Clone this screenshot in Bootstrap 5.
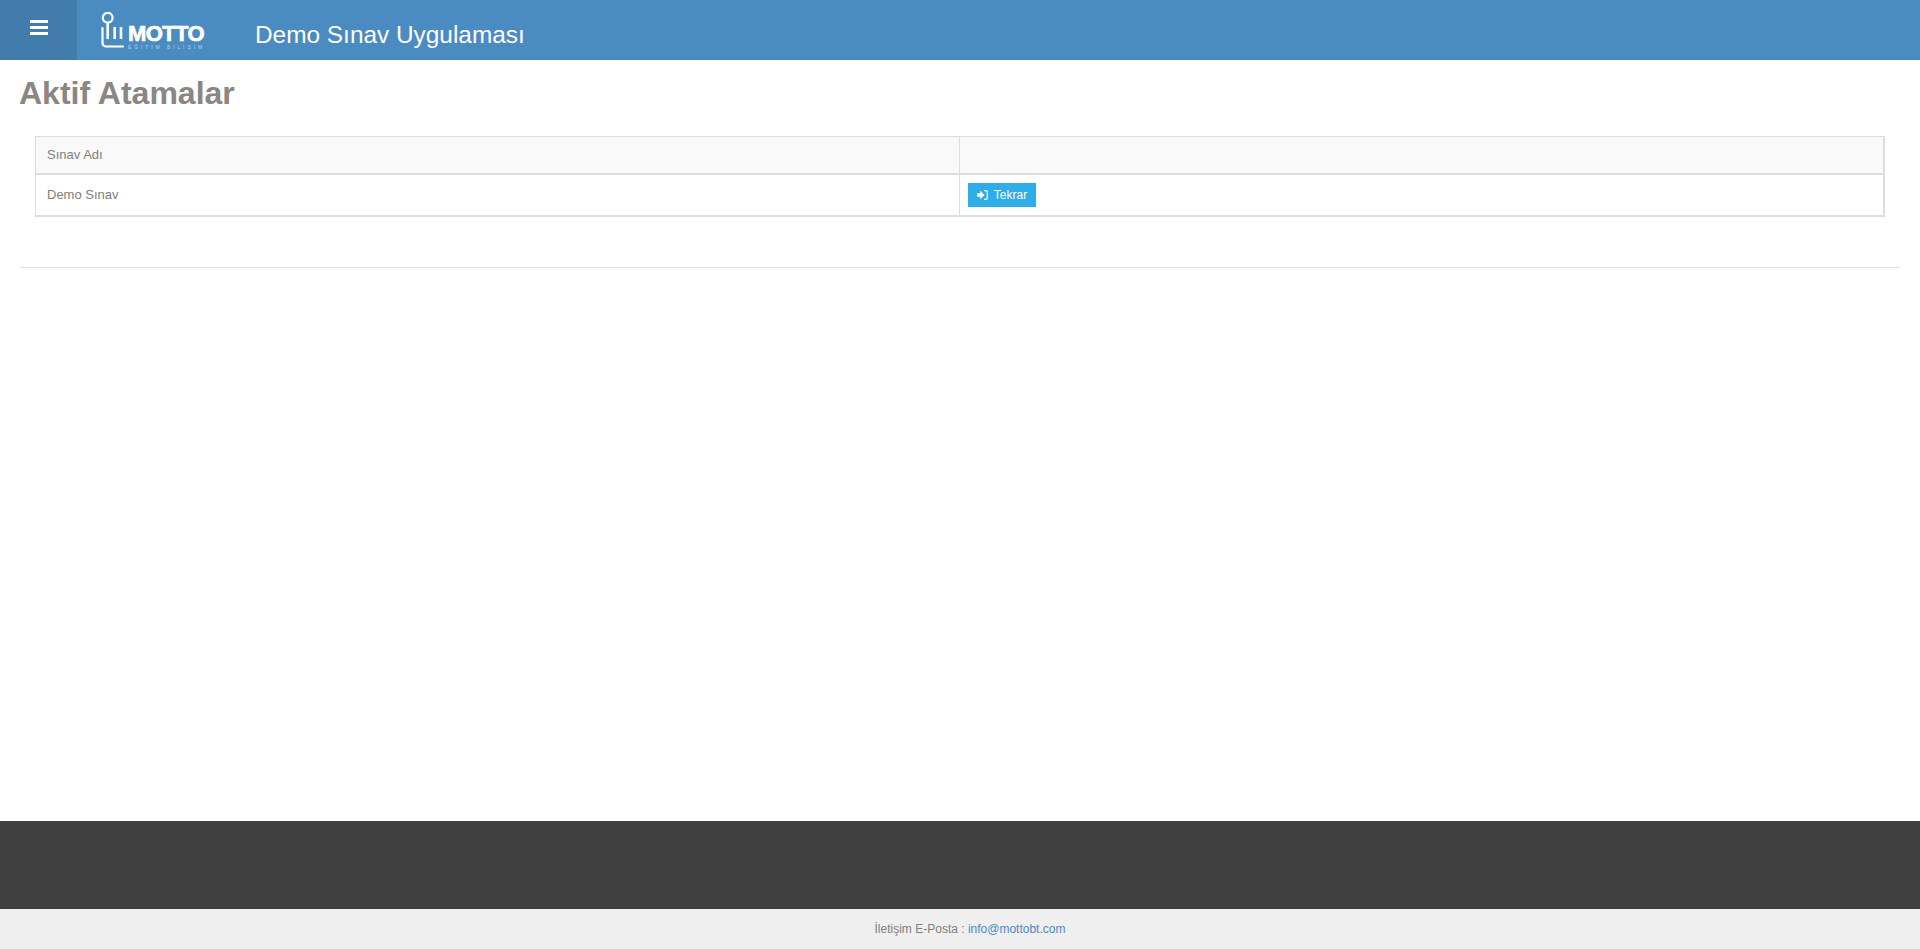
<!DOCTYPE html>
<html lang="tr">
<head>
<meta charset="utf-8">
<title>Demo Sınav Uygulaması</title>
<link href="https://cdn.jsdelivr.net/npm/bootstrap@5.3.0/dist/css/bootstrap.min.css" rel="stylesheet">
<style>
html,body{height:100%}
body{font-family:"Liberation Sans",Arial,sans-serif;color:#827e7c;font-size:13px;background:#fff}
.shell{height:949px}
.topbar{height:60px;background:#4a8bc2}
.menu-toggle{width:77px;background:#427cad;border:0;padding:0 0 6px 0;gap:3px}
.menu-bar{display:block;width:18px;height:3px;background:#fff;margin:0 auto}
.logo-box{margin-left:24px;width:110px;height:60px}
.logo-word{font-size:22px;font-weight:700;line-height:17px;color:#fff;letter-spacing:-.6px;-webkit-text-stroke:.7px #fff}
.logo-sub{font-size:5px;line-height:6px;letter-spacing:2.9px;color:#b5d2ea;white-space:nowrap;margin-top:2px}
.logo-mark{margin-top:12px}
.logo-text{margin-top:25px}
.app-title{font-size:24.4px;color:#fff;margin:5px 0 0 44px;line-height:60px}
.page-head{font-size:32px;font-weight:700;color:#8a8684;margin:15px 0 0;padding:0 0 0 19px;line-height:36px}
.table-wrap{margin:25px 35px 0 35px}
.exam-table{margin:0;width:100%;table-layout:fixed;color:#827e7c;font-size:13px;border-style:solid;border-color:#ddd;border-width:1px 2px 2px 1px}
.exam-table th,.exam-table td{border:1px solid #ddd;padding:0 0 0 11px;vertical-align:middle;font-weight:400;color:#827e7c}
.exam-table thead th{background:#f9f9f9;height:37px;border-bottom-width:2px}
.exam-table thead th:first-child{width:924px}
.exam-table tbody td{height:42px;background:#fff}
.exam-table tbody td:last-child{padding-left:8px}
.retry-btn{background:#2eade8;border:0;border-radius:0;color:#fff;font-size:12px;height:24px;width:68px;padding:0;line-height:24px;--bs-btn-hover-bg:#2eade8;--bs-btn-hover-color:#fff}
.retry-btn svg{margin-right:6px;vertical-align:-1px}
.divider{margin:50px 20px 0 20px;border:0;border-top:1px solid #ddd;opacity:1;height:0}
.foot-dark{height:88px;background:#404040}
.foot-light{height:40px;background:#efefef;font-size:12px;color:#827e7c;padding-left:20px}
.foot-light a{color:#4a8bc2;text-decoration:none}
</style>
</head>
<body>
<div class="shell d-flex flex-column">
  <header class="topbar d-flex flex-shrink-0">
    <button class="menu-toggle d-flex flex-column justify-content-center" type="button" aria-label="Menü">
      <span class="menu-bar"></span><span class="menu-bar"></span><span class="menu-bar"></span>
    </button>
    <div class="logo-box d-flex">
      <svg class="logo-mark flex-shrink-0" width="27" height="36" viewBox="0 0 27 36" fill="none" stroke="#fff" stroke-width="2.200">
        <circle cx="6.700" cy="5.800" r="4.900"/>
        <path d="M1.500 16v15a3.500 3.500 0 0 0 3.500 3.500h17" stroke-linecap="round"/>
        <path d="M6.700 10v17M13.700 15v12M20 15v12" stroke-width="2.600"/>
      </svg>
      <div class="logo-text">
        <div class="logo-word">MOTTO</div>
        <div class="logo-sub">EĞİTİM BİLİŞİM</div>
      </div>
    </div>
    <div class="app-title">Demo Sınav Uygulaması</div>
  </header>
  <main class="flex-grow-1">
    <h1 class="page-head">Aktif Atamalar</h1>
    <div class="table-wrap">
      <table class="table exam-table">
        <thead><tr><th>Sınav Adı</th><th></th></tr></thead>
        <tbody><tr><td>Demo Sınav</td><td>
          <button class="btn retry-btn" type="button"><svg width="11" height="10" viewBox="0 0 11 10" fill="#fff"><path d="M0 3.200h3.200V.8L7.500 5 3.200 9.200V6.800H0z"/><path d="M7 0h1.800A2.200 2.200 0 0 1 11 2.200v5.600A2.200 2.200 0 0 1 8.800 10H7V8.700h1.800a.9.9 0 0 0 .9-.9V2.200a.9.9 0 0 0-.9-.9H7z"/></svg>Tekrar</button>
        </td></tr></tbody>
      </table>
    </div>
    <hr class="divider">
  </main>
  <div class="foot-dark flex-shrink-0"></div>
  <footer class="foot-light flex-shrink-0 d-flex align-items-center justify-content-center">
    <span>İletişim E-Posta : <a href="#">info@mottobt.com</a></span>
  </footer>
</div>
<script src="https://cdn.jsdelivr.net/npm/bootstrap@5.3.0/dist/js/bootstrap.bundle.min.js"></script>
</body>
</html>
